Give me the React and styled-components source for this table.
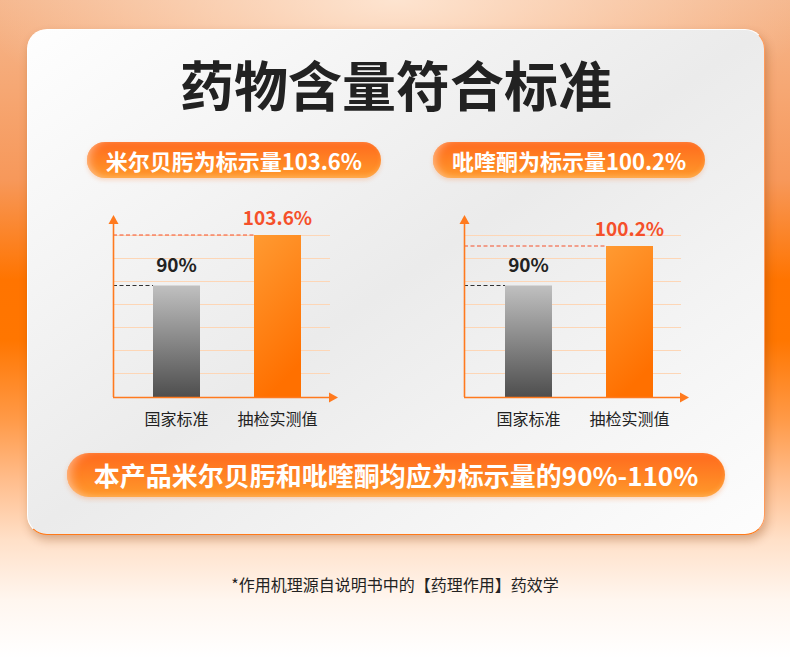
import React from "react";
import styled, { createGlobalStyle } from "styled-components";

const Global = createGlobalStyle`
  html, body { margin: 0; padding: 0; }
  body {
    width: 790px;
    height: 658px;
    overflow: hidden;
    font-family: "Noto Sans CJK SC", "Noto Sans", sans-serif;
  }
`;

const Page = styled.div`
  width: 790px;
  height: 658px;
  box-sizing: border-box;
  padding-top: 29px;
  display: flex;
  flex-direction: column;
  align-items: flex-start;
  background:
    radial-gradient(ellipse 420px 150px at 50% 0%, rgba(255, 236, 220, 0.85), rgba(255, 236, 220, 0) 100%),
    linear-gradient(
      to bottom,
      #f5b68c 0px,
      #f7985a 180px,
      #ff7400 280px,
      #ff7600 340px,
      #ff9a48 420px,
      #ffbd8c 480px,
      #ffe0c8 540px,
      #fff6ef 600px,
      #ffffff 658px
    );
`;

const Card = styled.div`
  margin-left: 27px;
  width: 738px;
  height: 506px;
  box-sizing: border-box;
  border-radius: 20px;
  border: 1.5px solid;
  border-color: #ffffff #ff9a5a #ff7a1a #ffffff;
  background: linear-gradient(to bottom right, #fefefe 0%, #ebebeb 50%, #fdfdfd 100%);
  box-shadow: 2px 5px 10px rgba(130, 60, 10, 0.32);
  display: flex;
  flex-direction: column;
  align-items: center;
`;

const Title = styled.h1`
  margin: 24px 0 0;
  height: 60px;
  line-height: 60px;
  font-size: 54px;
  font-weight: 700;
  color: #222222;
  letter-spacing: 0;
`;

const PillRow = styled.div`
  margin-top: 28px;
  display: flex;
  gap: 52px;
  justify-content: center;
`;

const Pill = styled.div`
  height: 36px;
  line-height: 36px;
  padding: 0 ${(p) => p.$pad}px;
  border-radius: 18px;
  color: #ffffff;
  font-size: 22px;
  font-weight: 700;
  white-space: nowrap;
  background: linear-gradient(to bottom, #ff6a1e 0%, #ff8424 55%, #ff9a2c 100%);
  box-shadow:
    inset 6px 0 8px -3px rgba(255, 190, 150, 0.75),
    inset 0 -2px 4px rgba(255, 200, 120, 0.35),
    0 2px 4px rgba(255, 120, 40, 0.25);
`;

const ChartRow = styled.div`
  margin-top: 27px;
  align-self: flex-start;
  margin-left: 77px;
  display: flex;
  gap: 111px;
`;

const ChartSvg = styled.svg`
  display: block;
  width: 240px;
  height: 230px;
  overflow: visible;
`;

const Banner = styled.div`
  margin-top: 18px;
  width: 658px;
  height: 44px;
  line-height: 44px;
  border-radius: 22px;
  text-align: center;
  color: #ffffff;
  font-size: 26px;
  font-weight: 700;
  white-space: nowrap;
  background: linear-gradient(to bottom, #ff6a1e 0%, #ff8424 55%, #ff9a2c 100%);
  box-shadow:
    inset 8px 0 10px -4px rgba(255, 190, 150, 0.75),
    inset 0 -2px 4px rgba(255, 200, 120, 0.35),
    0 2px 5px rgba(255, 120, 40, 0.3);
`;

const Footnote = styled.p`
  margin: 39px 0 0;
  align-self: center;
  height: 20px;
  line-height: 20px;
  font-size: 16px;
  color: #222222;
  white-space: nowrap;
`;

const AXIS = "#ff7a1e";
const GRID = "#fdd6b6";
const FONT = '"Noto Sans CJK SC", "Noto Sans", sans-serif';

function Chart({ id, grayX, orangeX, orangeTop, valueLabel, valueY }) {
  const grid = [30, 53, 76, 99, 122, 145, 168];
  const base = 192;
  const stdTop = 80.5;
  const w = 47;
  return (
    <ChartSvg viewBox="0 0 240 230">
      <defs>
        <linearGradient id={`${id}-g`} x1="0" y1="0" x2="0" y2="1">
          <stop offset="0" stopColor="#c0c0c0" />
          <stop offset="1" stopColor="#4e4e4e" />
        </linearGradient>
        <linearGradient id={`${id}-o`} x1="0" y1="0" x2="0.3" y2="1">
          <stop offset="0" stopColor="#ff9a32" />
          <stop offset="1" stopColor="#ff7000" />
        </linearGradient>
      </defs>
      {grid.map((y) => (
        <line key={y} x1="8" x2="225" y1={y + 0.5} y2={y + 0.5} stroke={GRID} strokeWidth="1" />
      ))}
      <rect x={grayX} y={stdTop} width={w} height={base - stdTop} fill={`url(#${id}-g)`} />
      <rect x={orangeX} y={orangeTop} width={w} height={base - orangeTop} fill={`url(#${id}-o)`} />
      <line x1="8" x2={grayX} y1={stdTop} y2={stdTop} stroke="#333" strokeWidth="1" strokeDasharray="4 2.5" />
      <line x1="8" x2={orangeX} y1={orangeTop} y2={orangeTop} stroke="#f5502a" strokeWidth="1" strokeDasharray="4 2.5" />
      <line x1="8.5" x2="8.5" y1="17" y2={base} stroke={AXIS} strokeWidth="1.6" />
      <line x1="8" x2="226" y1={base + 0.5} y2={base + 0.5} stroke={AXIS} strokeWidth="1.6" />
      <polygon points="8.5,10 3.5,19 13.5,19" fill={AXIS} />
      <polygon points="233,192.5 224,187.5 224,197.5" fill={AXIS} />
      <text x={grayX + w / 2} y="67" textAnchor="middle" fontFamily={FONT} fontWeight="700" fontSize="19" fill="#222">
        90%
      </text>
      <text x={orangeX + w / 2} y={valueY} textAnchor="middle" fontFamily={FONT} fontWeight="700" fontSize="19" fill="#f5502a">
        {valueLabel}
      </text>
      <text x={grayX + w / 2} y="220" textAnchor="middle" fontFamily={FONT} fontSize="16" fill="#222">
        国家标准
      </text>
      <text x={orangeX + w / 2} y="220" textAnchor="middle" fontFamily={FONT} fontSize="16" fill="#222">
        抽检实测值
      </text>
    </ChartSvg>
  );
}

export default function App() {
  return (
    <>
      <Global />
      <Page>
        <Card>
          <Title>药物含量符合标准</Title>
          <PillRow>
            <Pill $pad={19}>米尔贝肟为标示量103.6%</Pill>
            <Pill $pad={19}>吡喹酮为标示量100.2%</Pill>
          </PillRow>
          <ChartRow>
            <Chart id="a" grayX={48} orangeX={149} orangeTop={30} valueLabel="103.6%" valueY={20} />
            <Chart id="b" grayX={49} orangeX={150} orangeTop={41} valueLabel="100.2%" valueY={31} />
          </ChartRow>
          <Banner>本产品米尔贝肟和吡喹酮均应为标示量的90%-110%</Banner>
        </Card>
        <Footnote>*作用机理源自说明书中的【药理作用】药效学</Footnote>
      </Page>
    </>
  );
}
